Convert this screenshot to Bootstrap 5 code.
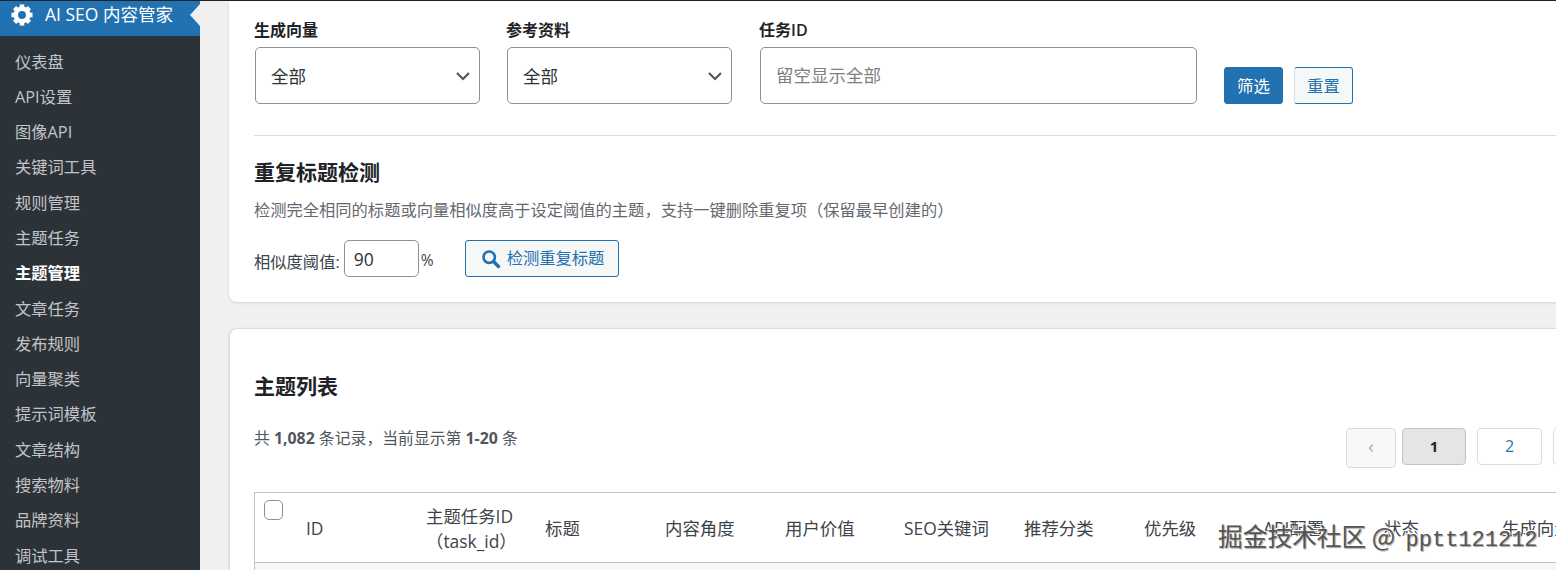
<!DOCTYPE html>
<html lang="zh">
<head>
<meta charset="utf-8">
<title>主题管理</title>
<link href="https://cdn.jsdelivr.net/npm/bootstrap@5.3.0/dist/css/bootstrap.min.css" rel="stylesheet">
<style>
html,body{height:570px;overflow:hidden}
body{background:#f0f0f1;color:#3c434a;font-family:"Open Sans","Noto Sans CJK SC",sans-serif;font-size:16px}
.wp-frame{height:570px;border-top:1px solid #1d2327;overflow:hidden;position:relative}
.wp-side{width:200px;flex:none;background:#2c3338;height:569px;overflow:hidden}
.wp-head{height:35px;background:#2271b1;color:#fff;font-size:17.5px;padding:0 0 7px 11px;gap:12px;position:relative}
.wp-head span{margin-bottom:2px}
.wp-head::after{content:"";position:absolute;right:0;top:3px;border:11.5px solid transparent;border-right:10px solid #f0f0f1;border-left:0}
.wp-menu{padding-top:8.5px}
.wp-menu a{display:block;height:35.3px;line-height:35.3px;padding-left:15px;color:#c3c4c7;text-decoration:none;font-size:16.3px}
.wp-menu a.on{color:#fff;font-weight:700}
.wp-main{padding-left:29px;width:1700px;flex:none}
.wp-panel{background:#fff;box-shadow:0 1px 3px rgba(0,0,0,.13);width:1640px}
.top-panel{height:301px;padding:19px 25px 0;border-radius:0 0 8px 8px}
.list-panel{margin-top:26px;border-radius:8px;border:1px solid #dcdcde;height:300px;padding:0 24px}
.fld-label{font-size:16px;font-weight:600;color:#1d2327;line-height:20px;margin-bottom:7px;display:block}
.fld-select.form-select{width:225px;height:57px;border:1px solid #8c8f94;border-radius:5px;font-size:17.5px;color:#2c3338;padding:2px 30px 0 15px;margin-left:1px;background-size:16px 12px;background-position:right 8px center;background-image:url("data:image/svg+xml,%3csvg xmlns='http://www.w3.org/2000/svg' viewBox='0 0 16 12'%3e%3cpath fill='none' stroke='%2350575e' stroke-width='2.200' d='M2 3l6 6 6-6'/%3e%3c/svg%3e")}
.fld-input.form-control{width:437px;height:57px;border:1px solid #8c8f94;border-radius:5px;font-size:17.5px;padding:0 15px 1px;margin-left:1px}
.fld-input.form-control::placeholder{color:#7c7f83}
.fld-b{margin-left:26px}
.fld-c{margin-left:27px}
.fld-d{margin-left:27px;gap:11px}
.wp-btn.btn{height:37px;padding:0 12px;border-radius:3px;font-size:16.4px;line-height:35px;border:1px solid #2271b1;width:59px}
.wp-btn-p.btn{background:#2271b1;color:#fff}
.wp-btn-s.btn{background:#f6f7f7;color:#2271b1;border-left-color:#cfe0ee}
.wp-divider{border:0;border-top:1px solid #dcdcde;opacity:1;margin:31px 0 22px}
.sec-title{font-size:21px;font-weight:700;color:#1d2327;line-height:28px;margin:0}
.sec-desc{color:#646970;margin:12px 0 18px;line-height:24px;font-size:16.28px}
.thr-input.form-control{width:75px;height:37px;border:1px solid #8c8f94;border-radius:5px;font-size:17.5px;padding:0 9px;margin:0 2px 0 4px;color:#2c3338}
.thr-label{font-size:16.3px;align-self:flex-end;line-height:30px}
.pct{font-size:15.5px;line-height:34px;align-self:flex-end}
.scan-btn.btn{height:37px;width:154px;background:#f6f7f7;border:1px solid #2271b1;color:#2271b1;font-size:16.3px;padding:0 0 0 2px;margin-left:31px;border-radius:3px;gap:6px}
.list-title{margin-top:43px;margin-bottom:19px}
.count-line{font-size:15.85px;color:#50575e;line-height:22px;padding-top:8px;width:1092px;flex:none}
.pager{margin-top:9px}
.pg{display:block;flex:none;height:37px;line-height:35px;border:1px solid #dcdcde;border-radius:4px;background:#fff;color:#1f7aa8;text-decoration:none;text-align:center;font-size:16px;width:65px;margin-left:11px}
.pg-prev{width:50px;height:40px;line-height:35px;margin-left:0;background:#f6f7f7;color:#a7aaad;font-size:18px}
.pg-cur{width:64px;margin-left:6px;background:#e5e5e5;color:#1d2327;font-weight:700;border-color:#c3c4c7;font-size:15px}
.list-table{width:1357px;table-layout:fixed;margin:24px 0 0;border:1px solid #c3c4c7;border-collapse:separate;border-spacing:0}
.list-table th{font-weight:400;font-size:17.4px;line-height:25px;color:#3c434a;padding:8px 12px 6px;vertical-align:middle;height:70px;border-bottom:1px solid #c3c4c7;background:#fff}
.list-table td{background:#f6f7f7;height:40px}
.list-table th.chk{padding:7px 0 0 9px;vertical-align:top}
.chk-box{display:block;width:19px;height:20px;border:1px solid #8c8f94;border-radius:5px;background:#fff}
.mark-layer{position:absolute;left:1218px;top:517px;font-size:24.7px;line-height:34px;color:#555;white-space:nowrap;text-shadow:1px 1px 1px rgba(0,0,0,.35),-1px -1px 0 #fff,1px -1px 0 #fff,-1px 1px 0 #fff;font-family:"Noto Sans CJK SC",sans-serif}
.mark-layer i{font-style:normal;font-family:"Liberation Mono",monospace;font-size:22px;margin-left:5px}
</style>
</head>
<body>
<div class="wp-frame d-flex">
  <nav class="wp-side">
    <div class="wp-head d-flex align-items-center">
      <svg width="22" height="22" viewBox="0 0 24 24" fill="#fff"><g><rect x="9.500" y="0.500" width="5" height="5"/><rect x="9.500" y="0.500" width="5" height="5" transform="rotate(45 12 12)"/><rect x="9.500" y="0.500" width="5" height="5" transform="rotate(90 12 12)"/><rect x="9.500" y="0.500" width="5" height="5" transform="rotate(135 12 12)"/><rect x="9.500" y="0.500" width="5" height="5" transform="rotate(180 12 12)"/><rect x="9.500" y="0.500" width="5" height="5" transform="rotate(225 12 12)"/><rect x="9.500" y="0.500" width="5" height="5" transform="rotate(270 12 12)"/><rect x="9.500" y="0.500" width="5" height="5" transform="rotate(315 12 12)"/></g><circle cx="12" cy="12" r="6.800" fill="none" stroke="#fff" stroke-width="5"/></svg>
      <span>AI SEO 内容管家</span>
    </div>
    <div class="wp-menu">
      <a href="#">仪表盘</a><a href="#">API设置</a><a href="#">图像API</a><a href="#">关键词工具</a><a href="#">规则管理</a><a href="#">主题任务</a><a href="#" class="on">主题管理</a><a href="#">文章任务</a><a href="#">发布规则</a><a href="#">向量聚类</a><a href="#">提示词模板</a><a href="#">文章结构</a><a href="#">搜索物料</a><a href="#">品牌资料</a><a href="#">调试工具</a>
    </div>
  </nav>
  <main class="wp-main">
    <section class="wp-panel top-panel">
      <div class="d-flex align-items-end">
        <div><label class="fld-label">生成向量</label><select class="form-select fld-select"><option>全部</option></select></div>
        <div class="fld-b"><label class="fld-label">参考资料</label><select class="form-select fld-select"><option>全部</option></select></div>
        <div class="fld-c"><label class="fld-label">任务ID</label><input class="form-control fld-input" placeholder="留空显示全部"></div>
        <div class="d-flex fld-d"><button class="btn wp-btn wp-btn-p">筛选</button><button class="btn wp-btn wp-btn-s">重置</button></div>
      </div>
      <hr class="wp-divider">
      <h2 class="sec-title">重复标题检测</h2>
      <p class="sec-desc">检测完全相同的标题或向量相似度高于设定阈值的主题，支持一键删除重复项（保留最早创建的）</p>
      <div class="d-flex align-items-center">
        <span class="thr-label">相似度阈值:</span>
        <input class="form-control thr-input" value="90">
        <span class="pct">%</span>
        <button class="btn scan-btn d-flex align-items-center justify-content-center">
          <svg width="20" height="20" viewBox="0 0 20 20"><circle cx="8.200" cy="8.200" r="5.700" fill="none" stroke="#2271b1" stroke-width="2.600"/><path d="M12.500 12.500l5 5" stroke="#2271b1" stroke-width="3.400" stroke-linecap="round"/></svg>
          <span>检测重复标题</span>
        </button>
      </div>
    </section>
    <section class="wp-panel list-panel">
      <h2 class="sec-title list-title">主题列表</h2>
      <div class="d-flex align-items-start">
        <div class="count-line">共 <b>1,082</b> 条记录，当前显示第 <b>1-20</b> 条</div>
        <div class="d-flex align-items-start pager">
          <a class="pg pg-prev" href="#">‹</a>
          <a class="pg pg-cur" href="#">1</a>
          <a class="pg" href="#">2</a>
          <a class="pg" href="#">3</a>
        </div>
      </div>
      <table class="table list-table">
        <colgroup><col style="width:39px"><col style="width:120px"><col style="width:119px"><col style="width:120px"><col style="width:120px"><col style="width:119px"><col style="width:120px"><col style="width:120px"><col style="width:119px"><col style="width:121px"><col style="width:118px"><col style="width:120px"></colgroup>
        <thead><tr>
          <th class="chk"><span class="chk-box"></span></th>
          <th>ID</th>
          <th>主题任务ID（task_id）</th>
          <th>标题</th>
          <th>内容角度</th>
          <th>用户价值</th>
          <th>SEO关键词</th>
          <th>推荐分类</th>
          <th>优先级</th>
          <th>API配置</th>
          <th>状态</th>
          <th>生成向量</th>
        </tr></thead>
        <tbody><tr><td colspan="12"></td></tr></tbody>
      </table>
    </section>
  </main>
  <div class="mark-layer">掘金技术社区 @ <i>pptt121212</i></div>
</div>
</body>
</html>
